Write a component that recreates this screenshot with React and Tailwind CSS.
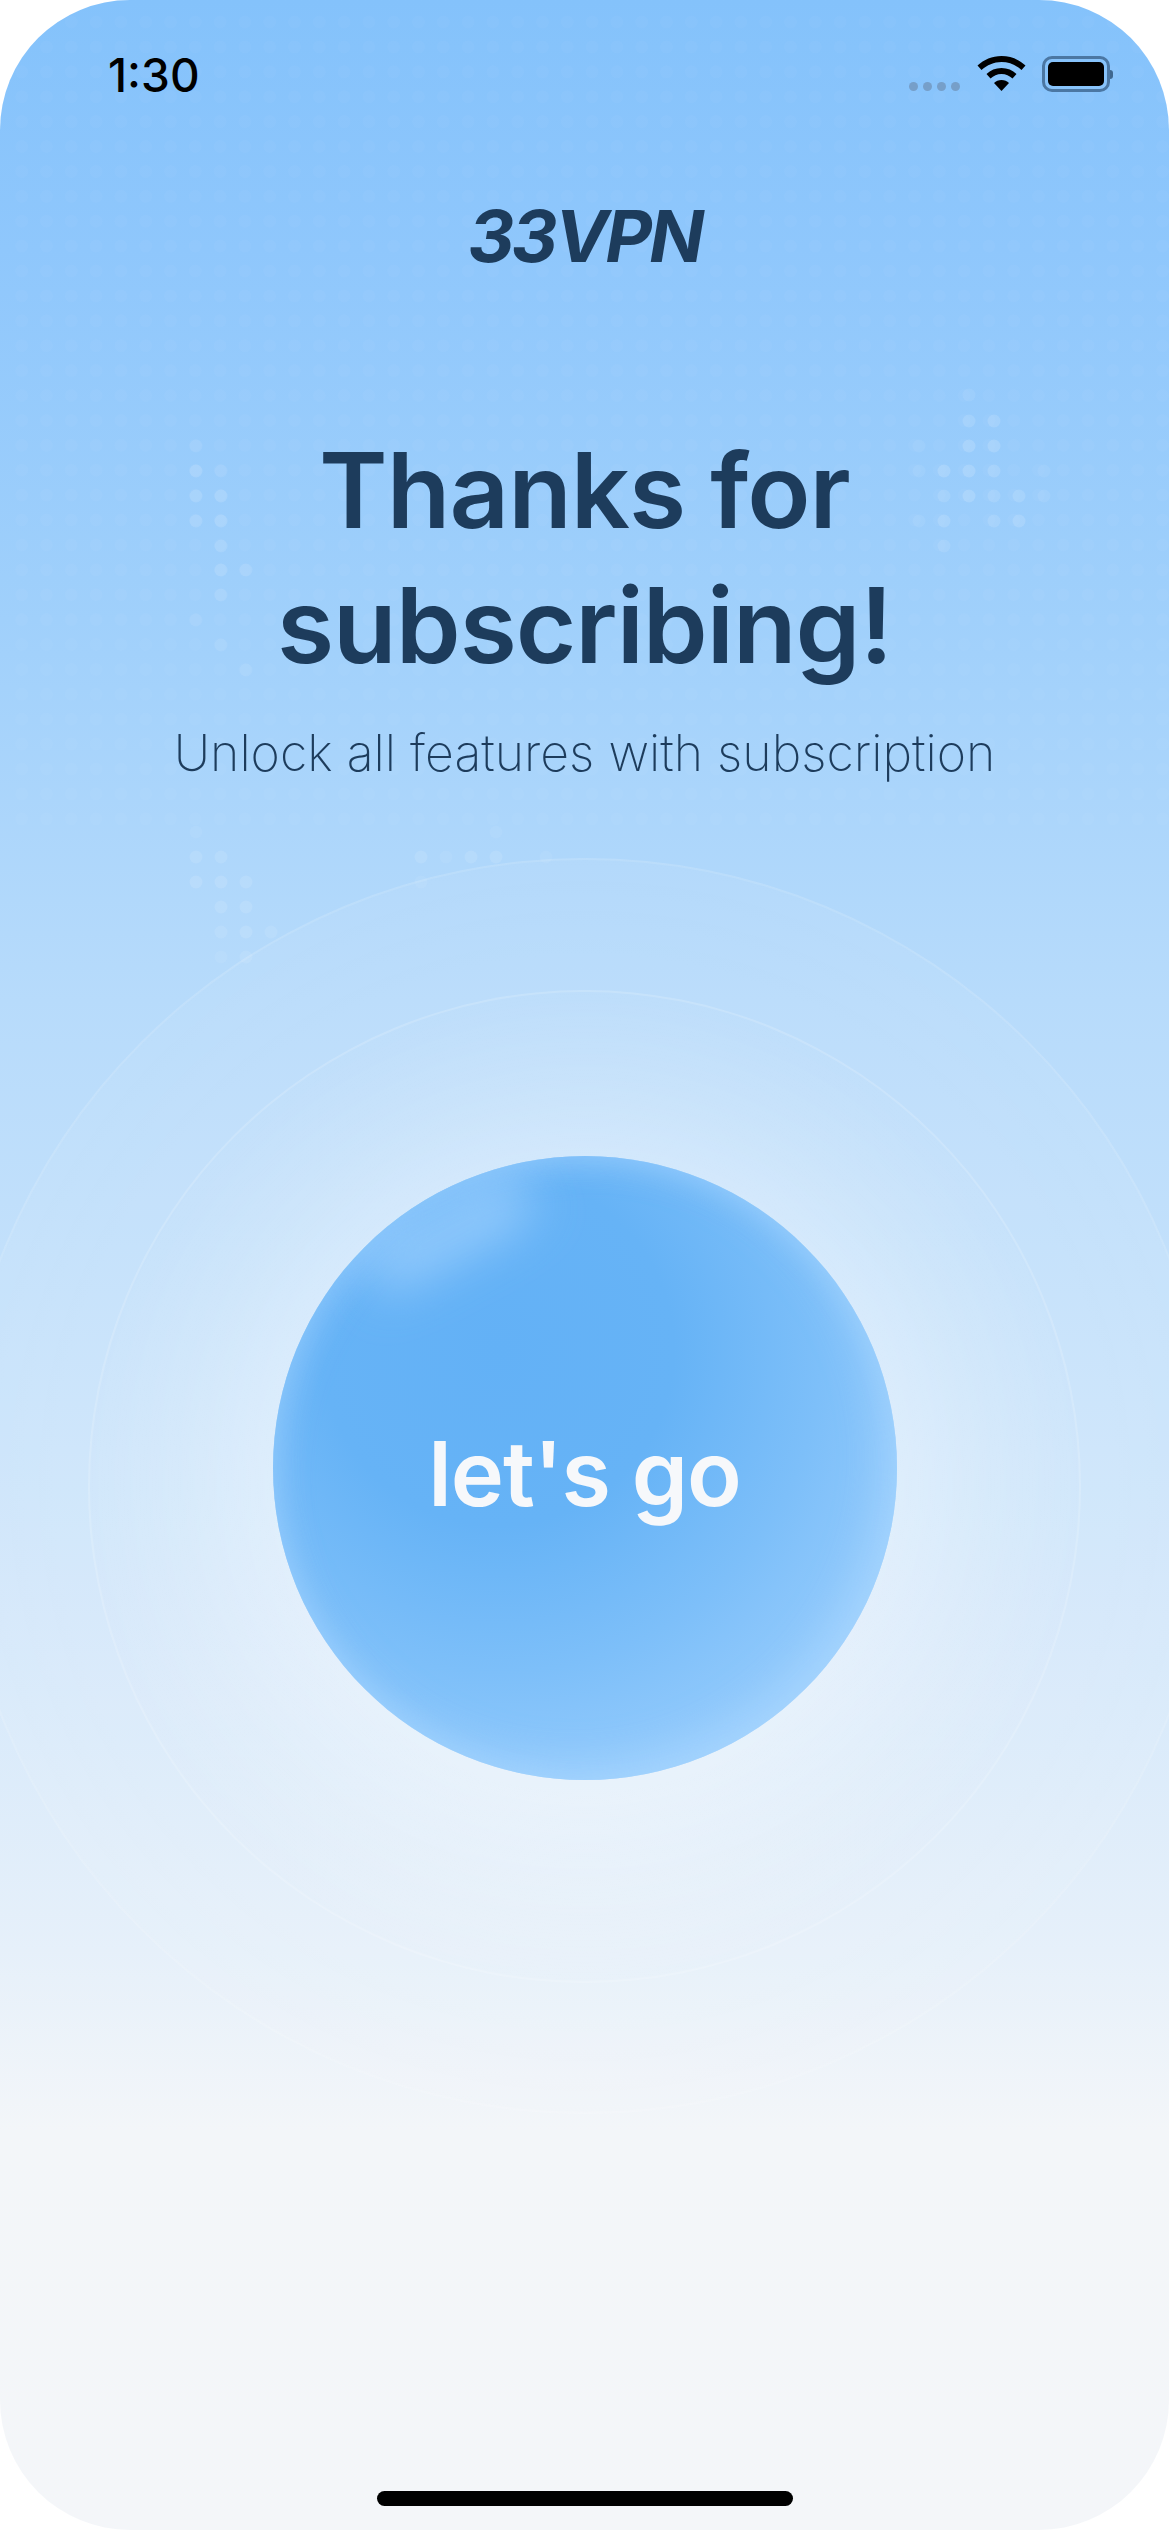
// 33VPN "thanks for subscribing" screen

// faint dot grid behind the top half of the screen
const gridDots = [];
for (let r = 0; r < 33; r++) {
  for (let c = 0; c < 47; c++) {
    gridDots.push({ x: 21.7 + c * 24.8, y: 22 + r * 24.9 });
  }
}

// brighter dots, [x, y, opacity]
const mapDots = [
  [196, 446, 0.1], [196, 471, 0.18], [221, 471, 0.1], [196, 496, 0.16], [221, 496, 0.17],
  [196, 521, 0.15], [221, 521, 0.17], [221, 546, 0.14], [221, 570, 0.15], [246, 570, 0.13],
  [221, 595, 0.12], [196, 620, 0.08], [221, 645, 0.1], [246, 670, 0.1],
  [969, 395, 0.1], [969, 421, 0.16], [994, 421, 0.17], [919, 446, 0.08], [969, 446, 0.2],
  [994, 446, 0.2], [919, 471, 0.09], [944, 471, 0.2], [969, 471, 0.2], [994, 471, 0.17],
  [1044, 471, 0.08], [944, 496, 0.14], [969, 496, 0.2], [994, 496, 0.15], [1019, 496, 0.16],
  [1044, 496, 0.1], [919, 521, 0.09], [944, 521, 0.17], [994, 521, 0.15], [1019, 521, 0.18],
  [944, 546, 0.13],
  [196, 832, 0.07], [196, 857, 0.14], [221, 857, 0.13], [196, 882, 0.15], [221, 882, 0.15],
  [246, 882, 0.14], [221, 907, 0.14], [246, 907, 0.14], [221, 932, 0.12], [246, 932, 0.15],
  [271, 932, 0.11], [221, 957, 0.08], [246, 957, 0.12],
  [421, 857, 0.14], [446, 857, 0.08], [471, 857, 0.13], [496, 857, 0.14], [496, 832, 0.07],
  [546, 857, 0.07], [421, 882, 0.08],
];

function DotMap() {
  return (
    <svg className="absolute inset-0" width="1169" height="1000" viewBox="0 0 1169 1000">
      {gridDots.map((d, i) => (
        <circle key={i} cx={d.x} cy={d.y} r="6.5" fill="#ffffff" opacity="0.03" />
      ))}
      {mapDots.map((d, i) => (
        <circle key={i} cx={d[0]} cy={d[1]} r="6.5" fill="#ffffff" opacity={d[2] * 0.75} />
      ))}
    </svg>
  );
}

function WifiIcon() {
  return (
    <svg width="49" height="35" viewBox="0 0 49 35" fill="#000000">
      <path d="M24.5 0C15 0 7 3.6.5 9.5L4.5 14C10 9 17 6 24.5 6S39 9 44.5 14L48.5 9.5C42 3.6 34 0 24.5 0Z" />
      <path d="M24.5 12C18.5 12 13.5 14 9.5 18L13.5 22.5C16.5 19.8 20.2 18 24.5 18S32.5 19.8 35.5 22.5L39.5 18C35.5 14 30.5 12 24.5 12Z" />
      <path d="M24.5 35L17 27C19 25 21.5 24 24.5 24S30 25 32 27Z" />
    </svg>
  );
}

function StatusBar() {
  return (
    <div className="w-full h-[92px] flex justify-between items-end pl-[108px] pr-[56px]">
      <span className="text-[46px] leading-[46px] font-medium text-black mb-[-6px]">1:30</span>
      <div className="flex items-end">
        <div className="flex gap-[5px] mb-[1px]">
          <span className="w-[9px] h-[9px] rounded-full bg-[#769fc9]" />
          <span className="w-[9px] h-[9px] rounded-full bg-[#769fc9]" />
          <span className="w-[9px] h-[9px] rounded-full bg-[#769fc9]" />
          <span className="w-[9px] h-[9px] rounded-full bg-[#769fc9]" />
        </div>
        <div className="ml-[17px] mb-[1px]">
          <WifiIcon />
        </div>
        <div className="ml-[16px] flex items-center">
          <div className="w-[68px] h-[36px] rounded-[10px] border-[3px] border-[#4b77a3] p-[3px]">
            <div className="w-full h-full rounded-[5px] bg-black" />
          </div>
          <div className="w-[3px] h-[9px] rounded-r-full bg-[#3f6890]" />
        </div>
      </div>
    </div>
  );
}

export default function App() {
  return (
    <div className="w-[1169px] h-[2530px] bg-white font-[Inter,sans-serif]">
      <div className="relative w-full h-full overflow-hidden rounded-[130px] bg-[linear-gradient(180deg,#84c2fb_0px,#8fc7fc_250px,#a0d0fb_620px,#b7dbfb_1000px,#cbe4fb_1450px,#e6f0fa_1950px,#f3f6f9_2130px,#f4f6f9_2530px)]">
        <DotMap />

        <main className="relative flex flex-col items-center">
          <StatusBar />

          <div className="mt-[107px] text-[72px] leading-[74px] font-bold italic tracking-[-3px] text-[#1d3c5c]">
            33VPN
          </div>

          <h1 className="mt-[150px] text-center text-[104px] leading-[135px] font-semibold tracking-[-1px] text-[#1d3c5c]">
            Thanks for
            <br />
            subscribing!
          </h1>

          <p className="mt-[30px] text-[50px] leading-[60px] font-extralight text-[#1d3c5c]">
            Unlock all features with subscription
          </p>

          {/* outer ring, inner ring, button */}
          <div className="mt-[75px] shrink-0 w-[1256px] h-[1256px] rounded-full border-2 border-white/10 bg-[radial-gradient(circle,rgba(255,255,255,0.08)_60%,rgba(255,255,255,0.03)_100%)] flex items-center justify-center">
            <div className="w-[993px] h-[993px] rounded-full border-2 border-white/15 bg-[radial-gradient(circle_closest-side,rgba(255,255,255,0.3)_62%,rgba(255,255,255,0.14)_82%,rgba(255,255,255,0.03)_100%)] flex items-center justify-center pb-[36px]">
              <button className="relative w-[624px] h-[624px] rounded-full overflow-hidden flex items-center justify-center bg-[radial-gradient(circle_at_36%_31%,#63b1f6_0%,#66b3f6_30%,#7dbff9_55%,#93cafc_75%,#aad4fc_100%)] shadow-[inset_-12px_-12px_40px_rgba(175,218,255,0.6),inset_10px_10px_30px_rgba(150,205,255,0.45)]">
                <span className="absolute left-[85px] top-[50px] w-[180px] h-[55px] -rotate-[28deg] rounded-full bg-[#a9d6ff]/65 blur-xl" />
                <span className="relative text-[90px] leading-[94px] font-semibold tracking-[-1px] text-[#f6f8fb] mt-[12px]">
                  let's go
                </span>
              </button>
            </div>
          </div>
        </main>

        <div className="absolute bottom-[24px] left-[377px] w-[416px] h-[15px] rounded-full bg-black" />
      </div>
    </div>
  );
}
